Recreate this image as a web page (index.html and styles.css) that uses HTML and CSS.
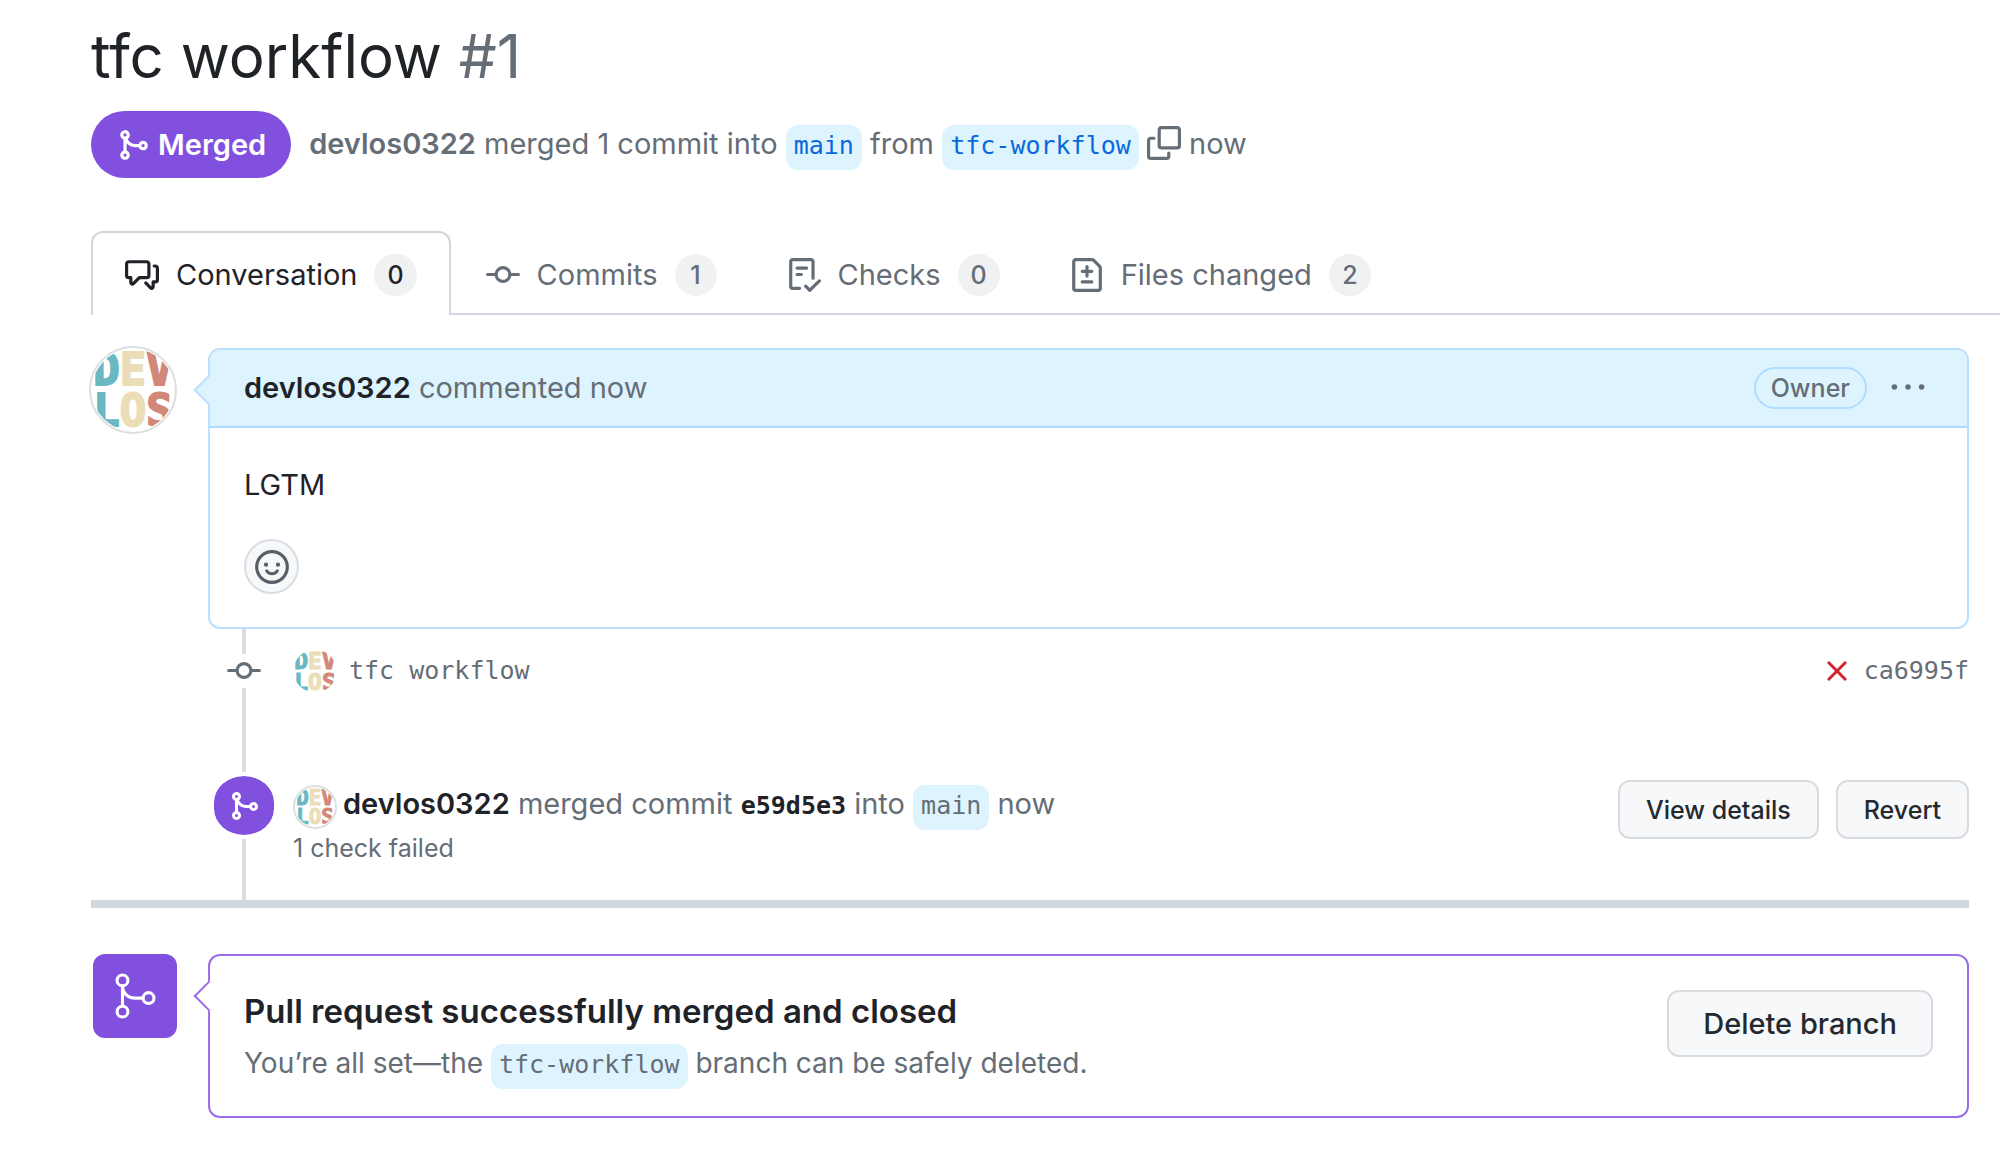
FILE: index.html
```html
<!DOCTYPE html>
<html lang="en">
<head>
  <meta charset="UTF-8">
  <meta name="viewport" content="width=device-width, initial-scale=1.0">
  <title>tfc workflow #1</title>
  <link rel="stylesheet" href="styles.css">
</head>
<body>
  <!-- shared icons -->
  <svg class="sprite" aria-hidden="true">
    <symbol id="icon-merge" viewBox="0 0 16 16">
      <path d="M5.45 5.154A4.25 4.25 0 0 0 9.25 7.5h1.378a2.251 2.251 0 1 1 0 1.5H9.25A5.734 5.734 0 0 1 5 7.123v3.505a2.25 2.25 0 1 1-1.5 0V5.372a2.25 2.25 0 1 1 1.95-.218ZM4.25 13.5a.75.75 0 1 0 0-1.5.75.75 0 0 0 0 1.5Zm8.5-4.5a.75.75 0 1 0 0-1.5.75.75 0 0 0 0 1.5ZM5 3.25a.75.75 0 1 0 0 .005V3.25Z"/>
    </symbol>
    <symbol id="icon-commit" viewBox="0 0 16 16">
      <path d="M11.93 8.5a4.002 4.002 0 0 1-7.86 0H.75a.75.75 0 0 1 0-1.5h3.32a4.002 4.002 0 0 1 7.86 0h3.32a.75.75 0 0 1 0 1.5Zm-1.43-.75a2.5 2.5 0 1 0-5 0 2.5 2.5 0 0 0 5 0Z"/>
    </symbol>
    <symbol id="avatar" viewBox="0 0 88 88">
      <clipPath id="avatar-clip"><circle cx="44" cy="44" r="43"/></clipPath>
      <circle cx="44" cy="44" r="43" fill="#fff"/>
      <g class="avatar-text" clip-path="url(#avatar-clip)">
        <text x="44" y="39"><tspan class="teal">D</tspan><tspan class="sand">E</tspan><tspan class="coral">V</tspan></text>
        <text x="44" y="82"><tspan class="teal">L</tspan><tspan class="sand">O</tspan><tspan class="coral">S</tspan></text>
      </g>
    </symbol>
  </svg>

  <main class="page">
    <header>
      <h1>tfc workflow <span class="number">#1</span></h1>
      <div class="meta">
        <span class="state"><svg class="icon"><use href="#icon-merge"/></svg>Merged</span>
        <p><strong>devlos0322</strong> merged 1 commit into <a class="branch link" href="#">main</a> from <a class="branch link" href="#">tfc-workflow</a> <button class="copy" type="button" aria-label="Copy"><svg class="icon" viewBox="0 0 16 16"><path d="M0 6.75C0 5.784.784 5 1.75 5h1.5a.75.75 0 0 1 0 1.5h-1.5a.25.25 0 0 0-.25.25v7.5c0 .138.112.25.25.25h7.5a.25.25 0 0 0 .25-.25v-1.5a.75.75 0 0 1 1.5 0v1.5A1.75 1.75 0 0 1 9.25 16h-7.5A1.75 1.75 0 0 1 0 14.25Z"/><path d="M5 1.75C5 .784 5.784 0 6.75 0h7.5C15.216 0 16 .784 16 1.75v7.5A1.75 1.75 0 0 1 14.25 11h-7.5A1.75 1.75 0 0 1 5 9.25Zm1.75-.25a.25.25 0 0 0-.25.25v7.5c0 .138.112.25.25.25h7.5a.25.25 0 0 0 .25-.25v-7.5a.25.25 0 0 0-.25-.25Z"/></svg></button> now</p>
      </div>
    </header>

    <nav class="tabs">
      <a class="tab active" href="#">
        <svg class="icon" viewBox="0 0 16 16"><path d="M1.75 1h8.5c.966 0 1.75.784 1.75 1.75v5.5A1.75 1.75 0 0 1 10.25 10H7.061l-2.574 2.573A1.458 1.458 0 0 1 2 11.543V10h-.25A1.75 1.75 0 0 1 0 8.25v-5.5C0 1.784.784 1 1.75 1ZM1.5 2.75v5.5c0 .138.112.25.25.25h1a.75.75 0 0 1 .75.75v2.19l2.72-2.72a.749.749 0 0 1 .53-.22h3.5a.25.25 0 0 0 .25-.25v-5.5a.25.25 0 0 0-.25-.25h-8.5a.25.25 0 0 0-.25.25Zm13 2a.25.25 0 0 0-.25-.25h-.5a.75.75 0 0 1 0-1.5h.5c.966 0 1.75.784 1.75 1.75v5.5A1.75 1.75 0 0 1 14.25 12H14v1.543a1.458 1.458 0 0 1-2.487 1.03L9.22 12.28a.749.749 0 0 1 .326-1.275.749.749 0 0 1 .734.215l2.22 2.22v-2.19a.75.75 0 0 1 .75-.75h1a.25.25 0 0 0 .25-.25Z"/></svg>
        Conversation <span class="counter">0</span>
      </a>
      <a class="tab" href="#">
        <svg class="icon"><use href="#icon-commit"/></svg>
        Commits <span class="counter">1</span>
      </a>
      <a class="tab" href="#">
        <svg class="icon" viewBox="0 0 16 16"><path d="M2.5 1.75v11.5c0 .138.112.25.25.25h3.17a.75.75 0 0 1 0 1.5H2.75A1.75 1.75 0 0 1 1 13.25V1.75C1 .784 1.784 0 2.75 0h8.5C12.216 0 13 .784 13 1.75v7.736a.75.75 0 0 1-1.5 0V1.75a.25.25 0 0 0-.25-.25h-8.5a.25.25 0 0 0-.25.25Zm13.274 9.537-4.557 4.45a.75.75 0 0 1-1.055-.008l-1.943-1.95a.75.75 0 0 1 1.062-1.058l1.419 1.425 4.026-3.932a.75.75 0 1 1 1.048 1.074ZM4.75 4h4.5a.75.75 0 0 1 0 1.5h-4.5a.75.75 0 0 1 0-1.5ZM4 7.75A.75.75 0 0 1 4.75 7h2a.75.75 0 0 1 0 1.5h-2A.75.75 0 0 1 4 7.75Z"/></svg>
        Checks <span class="counter">0</span>
      </a>
      <a class="tab" href="#">
        <svg class="icon" viewBox="0 0 16 16"><path d="M1 1.75C1 .784 1.784 0 2.75 0h7.586c.464 0 .909.184 1.237.513l2.914 2.914c.329.328.513.773.513 1.237v9.586A1.75 1.75 0 0 1 13.25 16H2.75A1.75 1.75 0 0 1 1 14.25Zm1.75-.25a.25.25 0 0 0-.25.25v12.5c0 .138.112.25.25.25h10.5a.25.25 0 0 0 .25-.25V4.664a.25.25 0 0 0-.073-.177l-2.914-2.914a.25.25 0 0 0-.177-.073ZM8 3.25a.75.75 0 0 1 .75.75v1.5h1.5a.75.75 0 0 1 0 1.5h-1.5v1.5a.75.75 0 0 1-1.5 0V7h-1.5a.75.75 0 0 1 0-1.5h1.5V4A.75.75 0 0 1 8 3.25Zm-3 8a.75.75 0 0 1 .75-.75h4.5a.75.75 0 0 1 0 1.5h-4.5a.75.75 0 0 1-.75-.75Z"/></svg>
        Files changed <span class="counter">2</span>
      </a>
    </nav>

    <!-- first comment -->
    <section class="row">
      <svg class="avatar large ring"><use href="#avatar"/></svg>
      <article class="box comment">
        <div class="comment-header">
          <p><strong class="author">devlos0322</strong> commented now</p>
          <span class="owner">Owner</span>
          <button class="menu" type="button" aria-label="Show options"><svg class="icon" viewBox="0 0 16 16"><circle cx="1.6" cy="7.5" r="1.3"/><circle cx="8" cy="7.5" r="1.3"/><circle cx="14.4" cy="7.5" r="1.3"/></svg></button>
        </div>
        <div class="comment-body">
          <p>LGTM</p>
          <button class="react" type="button" aria-label="Add a reaction"><svg class="icon" viewBox="0 0 16 16"><circle cx="8" cy="8" r="7.2" fill="none" stroke="currentColor" stroke-width="1.5"/><circle cx="5.2" cy="6.9" r="1"/><circle cx="10.8" cy="6.9" r="1"/><path d="M5.5 9.8c1.2 1.8 3.8 1.8 5 0" fill="none" stroke="currentColor" stroke-width="1.4" stroke-linecap="round"/></svg></button>
        </div>
      </article>
    </section>

    <!-- timeline -->
    <section class="timeline">
      <div class="event commit">
        <span class="marker"><svg class="icon"><use href="#icon-commit"/></svg></span>
        <svg class="avatar"><use href="#avatar"/></svg>
        <code>tfc workflow</code>
        <svg class="failed" viewBox="0 0 20 20"><path d="M1 1l18 18M19 1L1 19"/></svg>
        <code>ca6995f</code>
      </div>
      <div class="event merge">
        <span class="marker purple"><svg class="icon"><use href="#icon-merge"/></svg></span>
        <div class="event-text">
          <div class="event-line"><svg class="avatar ring"><use href="#avatar"/></svg><p><strong class="author">devlos0322</strong> merged commit <code class="sha">e59d5e3</code> into <span class="branch">main</span> now</p></div>
          <p class="small">1 check failed</p>
        </div>
        <button class="btn small" type="button">View details</button>
        <button class="btn small" type="button">Revert</button>
      </div>
    </section>

    <!-- merge result -->
    <section class="row merged">
      <span class="merge-icon">
        <svg viewBox="0 0 24 24"><circle cx="6" cy="4.5" r="2.6"/><circle cx="6" cy="19.5" r="2.6"/><circle cx="18.5" cy="13" r="2.6"/><path d="M6 7.1v9.8M6 7.1C6 10.5 8.500 13 12 13h3.900"/></svg>
      </span>
      <div class="box result">
        <div class="result-text">
          <h2>Pull request successfully merged and closed</h2>
          <p>You’re all set—the <span class="branch">tfc-workflow</span> branch can be safely deleted.</p>
        </div>
        <button class="btn" type="button">Delete branch</button>
      </div>
    </section>
  </main>
</body>
</html>
```
FILE: styles.css
```css
* {
  box-sizing: border-box;
}

body {
  margin: 0;
  background: #fff;
  color: #1f2328;
  font-family: Inter, "Liberation Sans", sans-serif;
  font-size: 29px;
  line-height: 40px;
}

h1, h2, p {
  margin: 0;
}

button {
  font-family: inherit;
  color: inherit;
}

strong {
  font-weight: 600;
}

code, .branch {
  font-family: "DejaVu Sans Mono", monospace;
  font-size: 25px;
}

.sprite {
  position: absolute;
  width: 0;
  height: 0;
}

.icon {
  width: 34px;
  height: 34px;
  flex-shrink: 0;
  fill: currentColor;
}

.page {
  padding: 16px 31px 31px 91px;
}

/* header */
h1 {
  font-size: 60px;
  line-height: 80px;
  font-weight: 400;
}

.number {
  color: #656d76;
}

.meta {
  display: flex;
  align-items: center;
  gap: 18px;
  margin-top: 15px;
  color: #656d76;
}

.state {
  display: flex;
  align-items: center;
  gap: 8px;
  height: 67px;
  padding: 0 25px;
  border-radius: 34px;
  background: #8250df;
  color: #fff;
  font-weight: 600;
}

.branch {
  padding: 6px 8px 10px;
  border-radius: 12px;
  background: #ddf4ff;
}

.link {
  color: #0969da;
  text-decoration: none;
}

.copy, .menu {
  padding: 0;
  border: 0;
  background: none;
  color: #656d76;
}

.copy .icon, .menu .icon {
  display: block;
}

.copy {
  vertical-align: -6px;
}

/* tabs */
.tabs {
  display: flex;
  margin: 53px -31px 0 0;
  box-shadow: inset 0 -2px #d0d7de;
}

.tab {
  display: flex;
  align-items: center;
  gap: 17px;
  height: 84px;
  padding: 4px 35px 0;
  color: #656d76;
  text-decoration: none;
}

.tab.active {
  border: 2px solid #d0d7de;
  border-bottom: 0;
  border-radius: 12px 12px 0 0;
  padding: 2px 32px 0;
  background: #fff;
  color: #1f2328;
}

.counter {
  min-width: 42px;
  padding: 0 13px;
  border-radius: 21px;
  background: #eff1f3;
  font-size: 25px;
  line-height: 42px;
  font-weight: 500;
  text-align: center;
}

/* comment */
.row {
  display: flex;
  align-items: flex-start;
  gap: 31px;
}

.avatar {
  width: 44px;
  height: 44px;
  flex-shrink: 0;
  border-radius: 50%;
}

.avatar.large {
  width: 88px;
  height: 88px;
  margin: -2px 0 0 -2px;
}

.ring {
  border: 2px solid #dcdee0;
}

.avatar-text {
  font-family: "DejaVu Sans Mono", monospace;
  font-size: 46px;
  font-weight: 700;
  text-anchor: middle;
  stroke-width: 2px;
}

.teal {
  fill: #69b8c2;
  stroke: #69b8c2;
}

.sand {
  fill: #eaddb8;
  stroke: #eaddb8;
}

.coral {
  fill: #d28878;
  stroke: #d28878;
}

.tabs + .row {
  margin-top: 33px;
}

.box {
  position: relative;
  flex: 1;
  border: 2px solid #bbdfff;
  border-radius: 12px;
}

/* arrow pointing at the avatar */
.box::before {
  content: "";
  position: absolute;
  top: 29px;
  left: -12px;
  width: 20px;
  height: 20px;
  border: solid #bbdfff;
  border-width: 0 0 2px 2px;
  background: #ddf4ff;
  transform: rotate(45deg);
}

.comment-header {
  display: flex;
  align-items: center;
  height: 78px;
  padding: 0 42px 0 34px;
  border-bottom: 2px solid #b0dbff;
  border-radius: 10px 10px 0 0;
  background: #ddf4ff;
  color: #656d76;
}

.comment-header p {
  flex: 1;
}

.author {
  color: #1f2328;
}

.owner {
  margin-right: 24px;
  padding: 0 15px;
  border: 2px solid #b0dbff;
  border-radius: 21px;
  font-size: 25px;
  line-height: 38px;
  font-weight: 500;
}

.comment-body {
  padding: 37px 34px 33px;
}

.react {
  display: flex;
  align-items: center;
  justify-content: center;
  width: 55px;
  height: 55px;
  margin-top: 34px;
  padding: 0;
  border: 2px solid #d8dee4;
  border-radius: 50%;
  background: #f6f8fa;
  color: #57606a;
}

/* timeline */
.timeline {
  position: relative;
  padding-left: 123px;
  border-bottom: 8px solid #d0d7de;
  color: #656d76;
}

.timeline::before {
  content: "";
  position: absolute;
  top: 0;
  bottom: 0;
  left: 151px;
  width: 4px;
  background: #d8dee4;
}

.event {
  position: relative;
  display: flex;
}

.commit {
  align-items: center;
  padding-top: 20px;
}

.marker {
  display: flex;
  align-items: center;
  justify-content: center;
  width: 60px;
  height: 34px;
  margin-right: 19px;
  background: #fff;
}

.commit code {
  margin-left: 12px;
}

.failed {
  width: 20px;
  height: 20px;
  margin-left: auto;
  margin-right: 5px;
  fill: none;
  stroke: #d1242f;
  stroke-width: 3px;
}

.merge {
  padding: 79px 0 34px;
}

.purple {
  height: 67px;
  border: solid #fff;
  border-width: 4px 0;
  border-radius: 34px;
  background: #8250df;
  background-clip: padding-box;
  color: #fff;
}

.purple .icon {
  width: 32px;
  height: 32px;
}

.event-text {
  flex: 1;
  padding-top: 12px;
}

.event-line {
  display: flex;
  align-items: center;
  gap: 6px;
}

.event-line p {
  margin-bottom: 4px;
}

.small {
  font-size: 25px;
  line-height: 36px;
}

.sha {
  color: #1f2328;
  font-weight: 700;
}

.btn {
  height: 67px;
  padding: 0 34px;
  border: 2px solid #d8dce0;
  border-radius: 12px;
  background: #f6f8fa;
  color: #24292f;
  font-size: 29px;
  font-weight: 500;
}

.btn.small {
  height: 59px;
  margin: 8px 0 0 17px;
  padding: 0 26px;
  font-size: 25px;
}

/* merge result */
.merged {
  margin-top: 46px;
}

.merge-icon {
  display: flex;
  align-items: center;
  justify-content: center;
  width: 84px;
  height: 84px;
  margin-left: 2px;
  border-radius: 12px;
  background: #8250df;
}

.merge-icon svg {
  width: 50px;
  height: 50px;
  fill: none;
  stroke: #fff;
  stroke-width: 1.5px;
}

.result {
  display: flex;
  align-items: flex-start;
  padding: 34px 34px 31px;
  border-color: #9a6ee8;
}

.result::before {
  border-color: #9a6ee8;
  background: #fff;
}

.result-text {
  flex: 1;
  color: #656d76;
  font-size: 28px;
}

h2 {
  margin-bottom: 11px;
  color: #1f2328;
  font-size: 33px;
  line-height: 42px;
  font-weight: 600;
}
```
